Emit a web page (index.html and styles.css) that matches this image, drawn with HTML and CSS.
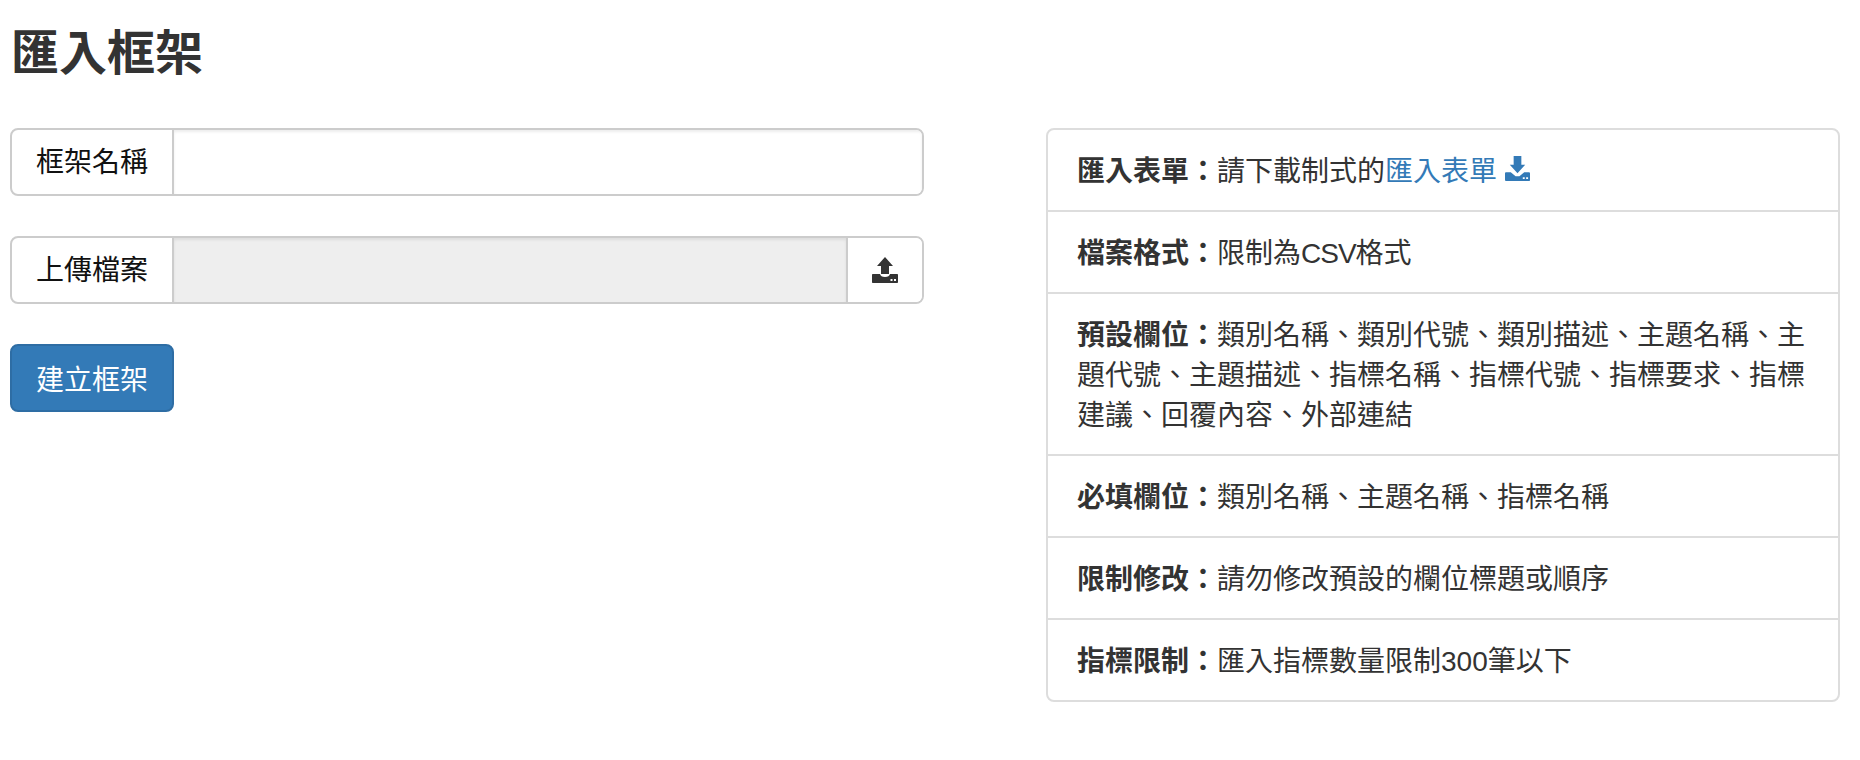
FILE: index.html
```html
<!DOCTYPE html>
<html lang="zh-Hant">
  <head>
    <meta charset="UTF-8" />
    <title>匯入框架</title>
    <link rel="stylesheet" href="styles.css">
  </head>
  <body>
    <h3 class="page-title">匯入框架</h3>
    <div class="content">
      <form class="import-form">
        <div class="input-group">
          <span class="addon">框架名稱</span>
          <input class="field" type="text">
        </div>
        <div class="input-group">
          <span class="addon">上傳檔案</span>
          <input class="field" type="text" disabled>
          <button class="upload-btn" type="button" aria-label="上傳檔案">
            <svg class="icon" width="26" height="26" viewBox="0 0 26 26">
              <path d="M13 0 L21 9 H17 V17 H9 V9 H5 Z" />
              <path fill-rule="evenodd" d="M1 17 H8 C8.5 19 10 20 13 20 C16 20 17.500 19 18 17 H25 C25.600 17 26 17.400 26 18 V25 C26 25.600 25.600 26 25 26 H1 C0.400 26 0 25.600 0 25 V18 C0 17.400 0.400 17 1 17 Z M18.500 22 V24 H20.500 V22 Z M22 22 V24 H24 V22 Z" />
            </svg>
          </button>
        </div>
        <button class="submit-btn" type="button">建立框架</button>
      </form>
      <ul class="notes">
        <li><strong>匯入表單：</strong>請下載制式的<a href="#">匯入表單
          <svg class="icon" width="26" height="26" viewBox="0 0 26 26">
            <path d="M9 0 H17 V9 H21 L13 18 L5 9 H9 Z" />
            <path fill-rule="evenodd" d="M1 17 H6 L11 21 H15 L20 17 H25 C25.600 17 26 17.400 26 18 V25 C26 25.600 25.600 26 25 26 H1 C0.400 26 0 25.600 0 25 V18 C0 17.400 0.400 17 1 17 Z M18.500 22 V24 H20.500 V22 Z M22 22 V24 H24 V22 Z" />
          </svg></a></li>
        <li><strong>檔案格式：</strong>限制為<span class="latin">CSV</span>格式</li>
        <li><strong>預設欄位：</strong>類別名稱、類別代號、類別描述、主題名稱、主題代號、主題描述、指標名稱、指標代號、指標要求、指標建議、回覆內容、外部連結</li>
        <li><strong>必填欄位：</strong>類別名稱、主題名稱、指標名稱</li>
        <li><strong>限制修改：</strong>請勿修改預設的欄位標題或順序</li>
        <li><strong>指標限制：</strong>匯入指標數量限制300筆以下</li>
      </ul>
    </div>
  </body>
</html>
```

FILE: styles.css
```css
* {
  box-sizing: border-box;
  margin: 0;
  padding: 0;
}

body {
  font-family: "Liberation Sans", "Noto Sans CJK TC", sans-serif;
  font-size: 28px;
  line-height: 40px;
  color: #333;
  background-color: #fff;
  padding: 0 20px 0 10px;
}

.page-title {
  font-size: 48px;
  line-height: 53px;
  font-weight: bold;
  padding: 27px 0 0 1px;
  margin-bottom: 48px;
}

.content {
  display: grid;
  grid-template-columns: 914px 794px;
  justify-content: space-between;
  align-items: start;
}

.input-group {
  display: flex;
  height: 68px;
  margin-bottom: 40px;
  border: 2px solid #ccc;
  border-radius: 8px;
  overflow: hidden;
}

.addon {
  width: 162px;
  flex: none;
  border-right: 2px solid #ccc;
  text-align: center;
  line-height: 66px;
  color: #111;
}

.field {
  flex: 1;
  min-width: 0;
  border: none;
  outline: none;
  background-color: #fff;
  box-shadow: inset 0 2px 3px rgba(0, 0, 0, 0.075);
}

.field:disabled {
  background-color: #eee;
}

.upload-btn {
  width: 76px;
  flex: none;
  display: flex;
  align-items: center;
  justify-content: center;
  border: none;
  border-left: 2px solid #ccc;
  background-color: #fff;
  color: #333;
}

.icon {
  fill: currentColor;
}

.submit-btn {
  display: block;
  width: 164px;
  height: 68px;
  font-family: inherit;
  font-size: 28px;
  color: #fff;
  background-color: #337ab7;
  border: 2px solid #2e6da4;
  border-radius: 8px;
}

.notes {
  list-style: none;
  border: 2px solid #ddd;
  border-radius: 8px;
}

.notes li {
  padding: 22px 30px 18px 29px;
  border-bottom: 2px solid #ddd;
}

.notes li:last-child {
  border-bottom: none;
}

.notes a {
  color: #337ab7;
  text-decoration: none;
}

.notes a .icon {
  width: 25px;
  height: 25px;
  vertical-align: 0;
}

.latin {
  letter-spacing: -1px;
}
```
